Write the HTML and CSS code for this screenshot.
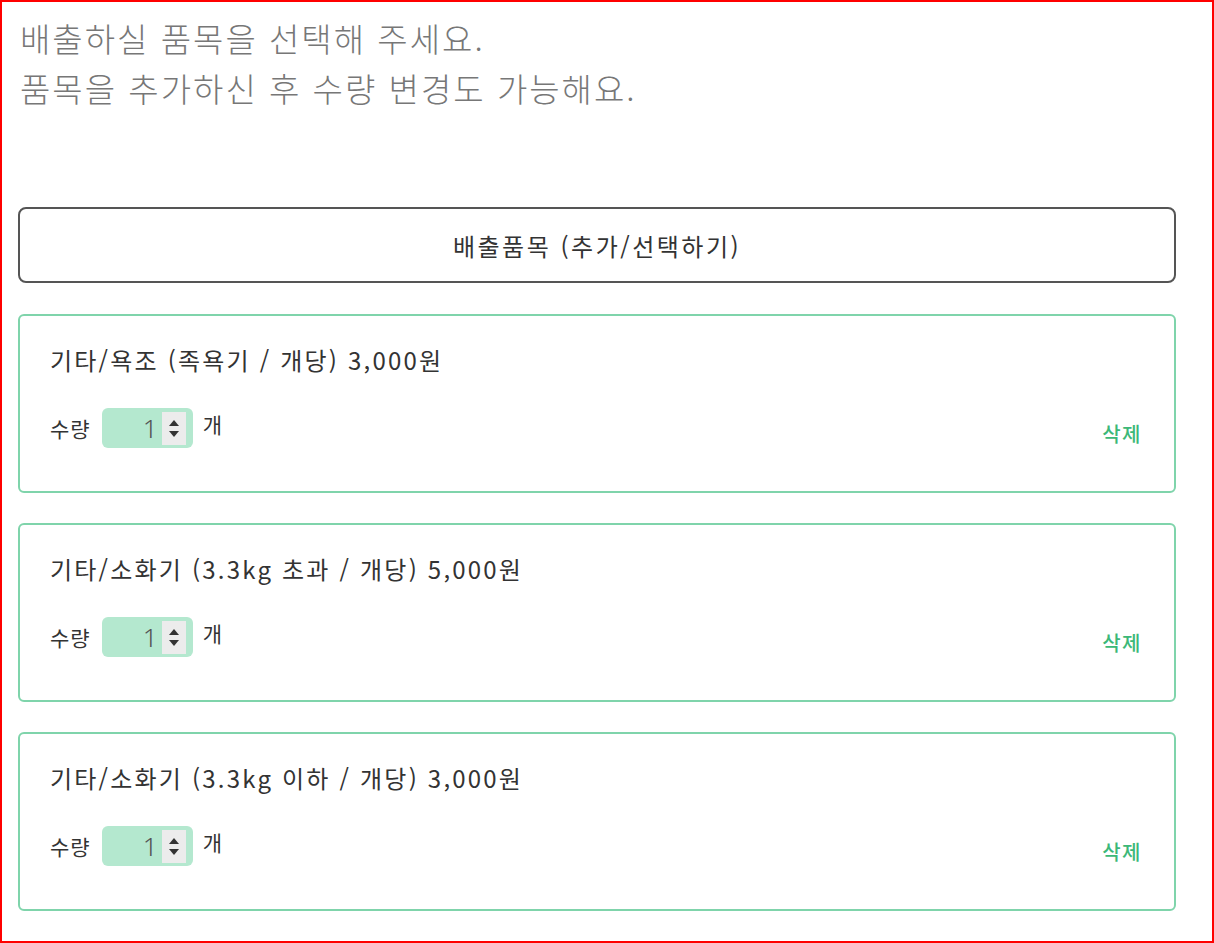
FILE: index.html
```html
<!DOCTYPE html>
<html lang="ko">
<head>
  <meta charset="UTF-8" />
  <meta name="viewport" content="width=device-width, initial-scale=1.0" />
  <title>배출 품목 선택</title>
  <link rel="stylesheet" href="styles.css">
</head>
<body>
  <div class="frame">
    <p class="intro">배출하실 품목을 선택해 주세요.<br>품목을 추가하신 후 수량 변경도 가능해요.</p>

    <button class="add-btn">배출품목 (추가/선택하기)</button>

    <div class="item-list">
      <div class="item-card">
        <div class="item-title">기타/욕조 (족욕기 / 개당) 3,000원</div>
        <div class="item-row">
          <span class="label">수량</span>
          <div class="qty">
            <span class="qty-value">1</span>
            <span class="spin">
              <svg width="10" height="6" viewBox="0 0 10 6"><path d="M5 0 L10 6 L0 6 Z" fill="#333"/></svg>
              <svg width="10" height="6" viewBox="0 0 10 6"><path d="M0 0 L10 0 L5 6 Z" fill="#333"/></svg>
            </span>
          </div>
          <span class="unit">개</span>
          <a class="delete" href="#">삭제</a>
        </div>
      </div>

      <div class="item-card">
        <div class="item-title">기타/소화기 (3.3kg 초과 / 개당) 5,000원</div>
        <div class="item-row">
          <span class="label">수량</span>
          <div class="qty">
            <span class="qty-value">1</span>
            <span class="spin">
              <svg width="10" height="6" viewBox="0 0 10 6"><path d="M5 0 L10 6 L0 6 Z" fill="#333"/></svg>
              <svg width="10" height="6" viewBox="0 0 10 6"><path d="M0 0 L10 0 L5 6 Z" fill="#333"/></svg>
            </span>
          </div>
          <span class="unit">개</span>
          <a class="delete" href="#">삭제</a>
        </div>
      </div>

      <div class="item-card">
        <div class="item-title">기타/소화기 (3.3kg 이하 / 개당) 3,000원</div>
        <div class="item-row">
          <span class="label">수량</span>
          <div class="qty">
            <span class="qty-value">1</span>
            <span class="spin">
              <svg width="10" height="6" viewBox="0 0 10 6"><path d="M5 0 L10 6 L0 6 Z" fill="#333"/></svg>
              <svg width="10" height="6" viewBox="0 0 10 6"><path d="M0 0 L10 0 L5 6 Z" fill="#333"/></svg>
            </span>
          </div>
          <span class="unit">개</span>
          <a class="delete" href="#">삭제</a>
        </div>
      </div>
    </div>
  </div>
</body>
</html>
```

FILE: styles.css
```css
body {
  margin: 0;
  font-family: 'Noto Sans CJK KR', 'Noto Sans', sans-serif;
  color: #333;
  background: #fff;
}

.frame {
  box-sizing: border-box;
  width: 1214px;
  height: 943px;
  border: 2px solid #f00;
  padding: 11px 36px 0 16px;
}

.intro {
  margin: 0 0 0 2px;
  font-size: 33px;
  font-weight: 300;
  letter-spacing: 2px;
  line-height: 50px;
  color: #777;
}

.add-btn {
  display: block;
  box-sizing: border-box;
  width: 100%;
  height: 76px;
  margin-top: 94px;
  background: #fff;
  border: 2px solid #555;
  border-radius: 8px;
  font-family: inherit;
  font-size: 24px;
  letter-spacing: 2.5px;
  color: #333;
  cursor: pointer;
}

.item-list {
  display: flex;
  flex-direction: column;
  gap: 30px;
  margin-top: 31px;
}

.item-card {
  box-sizing: border-box;
  height: 179px;
  border: 2px solid #7fd4ab;
  border-radius: 6px;
  padding: 26px 30px 0 30px;
}

.item-title {
  font-size: 24px;
  letter-spacing: 2.2px;
  line-height: 36px;
  color: #333;
}

.item-row {
  display: flex;
  align-items: center;
  margin-top: 30px;
  font-size: 21px;
  letter-spacing: 1px;
}

.label {
  margin-right: 11px;
}

.qty {
  display: flex;
  align-items: center;
  justify-content: flex-end;
  box-sizing: border-box;
  width: 91px;
  height: 40px;
  padding-right: 7px;
  background: #b4e8cf;
  border-radius: 6px;
}

.qty-value {
  font-family: 'Noto Sans', sans-serif;
  font-size: 26px;
  font-weight: 300;
  color: #555;
  margin-right: 3px;
}

.spin {
  display: flex;
  flex-direction: column;
  align-items: center;
  justify-content: center;
  gap: 5px;
  width: 24px;
  height: 33px;
  background: #ececec;
}

.unit {
  margin-left: 10px;
  margin-bottom: 8px;
}

.delete {
  margin-left: auto;
  margin-right: 2px;
  margin-top: 10px;
  color: #3cb878;
  font-size: 20px;
  font-weight: 500;
  letter-spacing: 1.5px;
  text-decoration: none;
}
```
